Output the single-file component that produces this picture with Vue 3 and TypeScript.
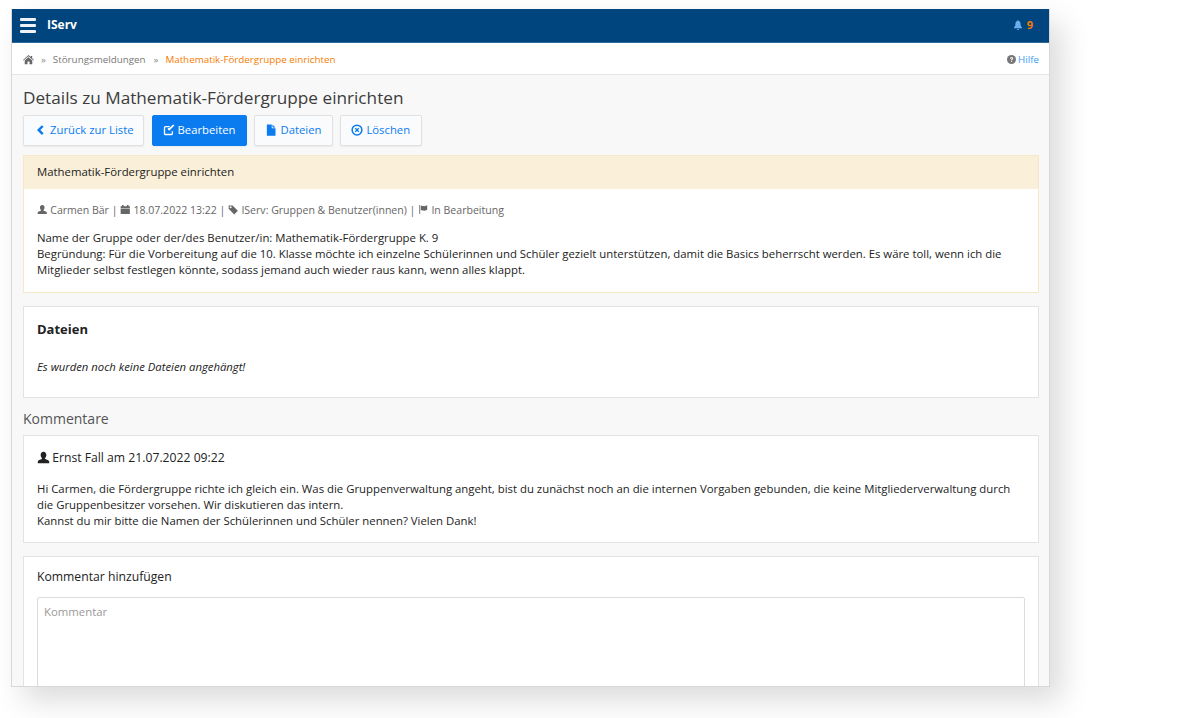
<script setup lang="ts">
const title = 'Mathematik-Fördergruppe einrichten'
</script>

<template>
  <div class="stage">
    <div class="window">
      <header class="topbar">
        <div class="brand">
          <span class="burger"><i></i><i></i><i></i></span>
          <span class="logo">IServ</span>
        </div>
        <div class="notify">
          <svg class="bell" viewBox="0 0 16 16"><path d="M8 0.500c.7 0 1.100.5 1.100 1.100 2 .5 3 2.200 3 4.400 0 3 .7 4.500 2.400 6v1H1.500v-1c1.700-1.500 2.400-3 2.400-6 0-2.200 1-3.900 3-4.400C6.900 1 7.300.5 8 .5zM6.300 14.300h3.400c0 1-.8 1.700-1.700 1.700s-1.700-.7-1.700-1.700z"/></svg>
          <b>9</b>
        </div>
      </header>
      <nav class="crumbs">
        <div class="trail">
          <svg class="home" viewBox="0 0 16 16"><path d="M8 1.500l3.300 3V2.800h2v3.500L16 8.800l-.8.800L8 3.300.8 9.600 0 8.800zM2.500 9.500L8 4.700l5.500 4.800V15H9.500v-4h-3v4h-4z"/></svg>
          <span class="sep">»</span>
          <span>Störungsmeldungen</span>
          <span class="sep second">»</span>
          <span class="current">{{ title }}</span>
        </div>
        <div class="help">
          <svg class="q" viewBox="0 0 16 16"><circle cx="8" cy="8" r="8"/><path d="M5.200 6.200C5.400 4.700 6.500 4 8.100 4c1.700 0 2.800.9 2.800 2.300 0 1.100-.6 1.600-1.300 2.100-.6.400-.7.600-.7 1.100H7.200c-.1-1 .2-1.500 1-2.100.5-.4.800-.6.800-1 0-.5-.4-.8-1-.8s-1 .3-1.100 1zM7.100 10.300H9v1.800H7.100z" fill="#fff"/></svg>
          <a>Hilfe</a>
        </div>
      </nav>
      <main class="content">
        <h1>Details zu {{ title }}</h1>
        <div class="actions">
          <button class="btn back">
            <svg viewBox="0 0 16 16" class="ico"><path d="M10.500 1.500l2.300 2.300L8.500 8l4.300 4.200-2.300 2.300L4 8z"/></svg>Zurück zur Liste
          </button>
          <button class="btn primary">
            <svg viewBox="0 0 16 16" class="ico"><path d="M12.500 9.500v3a1.500 1.500 0 0 1-1.500 1.500H3.500A1.500 1.500 0 0 1 2 12.500V5a1.500 1.500 0 0 1 1.500-1.500H9" fill="none" stroke="currentColor" stroke-width="1.800"/><path d="M6 6.800l2.200 2.200 7-7L13.500.5 8.200 5.800l-.7-.7z"/></svg>Bearbeiten
          </button>
          <button class="btn">
            <svg viewBox="0 0 16 16" class="ico"><path d="M2.500 0.500h6.500v5h5v10H2.500zM10 .5l4 4h-4z"/></svg>Dateien
          </button>
          <button class="btn">
            <svg viewBox="0 0 16 16" class="ico"><circle cx="8" cy="8" r="6.500" fill="none" stroke="currentColor" stroke-width="2"/><path d="M5 6.200L6.200 5 8 6.800 9.800 5 11 6.200 9.200 8 11 9.800 9.800 11 8 9.200 6.200 11 5 9.800 6.800 8z"/></svg>Löschen
          </button>
        </div>

        <section class="panel warm">
          <div class="panel-head">{{ title }}</div>
          <div class="panel-body">
            <p class="meta">
              <svg viewBox="0 0 16 16" class="mi"><path d="M8 1c2.200 0 3.500 1.700 3.500 4 0 1.600-.7 3-1.500 3.700v1.100c2 .6 5 1.500 5 3.200v2H1v-2c0-1.700 3-2.600 5-3.200V8.700C5.200 8 4.500 6.600 4.500 5c0-2.300 1.300-4 3.500-4z"/></svg>
              Carmen Bär |
              <svg viewBox="0 0 16 16" class="mi"><path d="M1 3h2V1h2.500v2h5V1H13v2h2v3H1zM1 7h14v8H1z"/></svg>
              18.07.2022 13:22 |
              <svg viewBox="0 0 16 16" class="mi"><path d="M1 2h6l8 8-5.500 5.500L1 7zM4 6a1.500 1.500 0 1 0 0-3 1.500 1.500 0 0 0 0 3z" fill-rule="evenodd"/></svg>
              IServ: Gruppen &amp; Benutzer(innen) |
              <svg viewBox="0 0 16 16" class="mi"><path d="M2 1h1.300v14H2zM4.300 2.500c2.500-1.200 4 .8 6 .3 1.300-.3 2.700-.8 3.700-1.300v7c-1 .5-2.400 1-3.700 1.300-2 .5-3.500-1.500-6-.3z"/></svg>
              In Bearbeitung
            </p>
            <p class="text">Name der Gruppe oder der/des Benutzer/in: Mathematik-Fördergruppe K. 9<br>Begründung: Für die Vorbereitung auf die 10. Klasse möchte ich einzelne Schülerinnen und Schüler gezielt unterstützen, damit die Basics beherrscht werden. Es wäre toll, wenn ich die Mitglieder selbst festlegen könnte, sodass jemand auch wieder raus kann, wenn alles klappt.</p>
          </div>
        </section>

        <section class="panel files">
          <h2>Dateien</h2>
          <p class="none">Es wurden noch keine Dateien angehängt!</p>
        </section>

        <h3>Kommentare</h3>

        <section class="panel comment">
          <div class="author">
            <svg viewBox="0 0 16 16" class="ai"><path d="M8 1c2.200 0 3.500 1.700 3.500 4 0 1.600-.7 3-1.500 3.700v1.100c2 .6 5 1.500 5 3.200v2H1v-2c0-1.700 3-2.600 5-3.200V8.700C5.200 8 4.500 6.600 4.500 5c0-2.300 1.300-4 3.500-4z"/></svg>
            Ernst Fall am 21.07.2022 09:22
          </div>
          <p class="text">Hi Carmen, die Fördergruppe richte ich gleich ein. Was die Gruppenverwaltung angeht, bist du zunächst noch an die internen Vorgaben gebunden, die keine Mitgliederverwaltung durch die Gruppenbesitzer vorsehen. Wir diskutieren das intern.<br>Kannst du mir bitte die Namen der Schülerinnen und Schüler nennen? Vielen Dank!</p>
        </section>

        <section class="panel add">
          <div class="add-title">Kommentar hinzufügen</div>
          <textarea class="area" placeholder="Kommentar"></textarea>
        </section>
      </main>
    </div>
  </div>
</template>

<style>
html, body { margin: 0; background: #fff; overflow: hidden; }
</style>

<style scoped>
.stage {
  height: 718px;
  overflow: hidden;
  padding: 9px 0 0 11px;
  box-sizing: border-box;
  font-family: "Open Sans", "Noto Sans", sans-serif;
  font-size: 11.370px;
  color: #222;
}
.window {
  width: 1039px;
  height: 678px;
  box-sizing: border-box;
  border: 1px solid #d8d8d8;
  border-top: 0;
  background: #f8f8f8;
  overflow: hidden;
  box-shadow: 12px 14px 28px rgba(0, 0, 0, 0.14);
}
.topbar {
  height: 34px;
  background: #00457e;
  border-bottom: 1px solid #2d6a9c;
  box-sizing: border-box;
  display: flex;
  align-items: center;
  justify-content: space-between;
  padding: 0 16px 2px 8px;
  color: #fff;
}
.brand { display: flex; align-items: center; gap: 11px; }
.burger { display: flex; flex-direction: column; gap: 3px; width: 16px; margin-top: 2px; }
.burger i { display: block; height: 3px; background: #eef2f6; border-radius: 1px; }
.logo { font-weight: 700; font-size: 12px; }
.notify { display: flex; align-items: center; gap: 4px; color: #f57c00; }
.notify b { font-size: 11px; font-weight: 700; }
.bell { width: 10px; height: 10px; fill: #6aaef2; }
.crumbs {
  height: 32px;
  background: #fff;
  border-bottom: 1px solid #e6e6e6;
  box-sizing: border-box;
  display: flex;
  align-items: center;
  justify-content: space-between;
  padding: 1px 10px 0 11px;
  font-size: 9.800px;
  color: #777;
}
.trail { display: flex; align-items: center; gap: 7px; }
.home { width: 11px; height: 11px; fill: #666; }
.sep { color: #888; }
.sep.second { margin-left: 1px; }
.current { color: #f57c00; }
.help { display: flex; align-items: center; gap: 2px; }
.help a { color: #3d9bf5; }
.q { width: 9px; height: 9px; fill: #777; }
.content { padding: 10px 10px 0 11px; }
h1 {
  margin: 0;
  font-size: 17.200px;
  font-weight: 400;
  line-height: 25px;
  color: #3c3c3c;
}
.actions { display: flex; gap: 7px; margin-top: 5px; }
.btn {
  height: 31px;
  padding: 0 11px 2px 10px;
  display: flex;
  align-items: center;
  gap: 3px;
  font: 400 11.300px "Open Sans", sans-serif;
  background: #fafbfc;
  border: 1px solid #e1e1e1;
  border-radius: 2px;
  box-shadow: 0 1px 2px rgba(0, 0, 0, 0.06);
  color: #0a7cf0;
}
.btn.back { padding-right: 9px; gap: 4px; margin-right: 1px; }
.btn.primary { background: #0a7cf0; border-color: #0a7cf0; color: #fff; }
.ico { width: 12px; height: 12px; fill: currentColor; }
.panel {
  background: #fff;
  border: 1px solid #e3e3e3;
  box-sizing: border-box;
}
.warm { margin-top: 9px; height: 138px; border-color: #f5e8c8; }
.panel-head {
  height: 33px;
  background: #faefd8;
  padding: 0 13px 2px;
  box-sizing: border-box;
  display: flex;
  align-items: center;
  color: #222;
}
.panel-body { padding: 13px 13px 0; }
.meta {
  margin: 0;
  line-height: 16px;
  color: #666;
  font-size: 10.550px;
}
.mi { width: 10.500px; height: 11px; fill: #666; vertical-align: -1px; }
.text { margin: 12px 0 0; line-height: 16px; color: #222; }
.files { margin-top: 13px; height: 92px; padding: 13px 13px 0; }
h2 { margin: 0; font-size: 13px; font-weight: 700; line-height: 18px; color: #222; }
.none { margin: 21px 0 0; font-style: italic; font-size: 11.300px; line-height: 16px; }
h3 { margin: 11px 0 6px; font-size: 14px; font-weight: 400; line-height: 20px; color: #555; }
.comment { height: 108px; padding: 13px 13px 0; }
.comment .text { margin-top: 14px; }
.author { font-size: 12.200px; line-height: 18px; color: #222; }
.ai { width: 13px; height: 13px; fill: #222; vertical-align: -1.500px; margin-right: -1px; }
.add { margin-top: 13px; height: 200px; padding: 11px 13px 0; }
.add-title { font-size: 12.200px; line-height: 17px; }
.area {
  display: block;
  width: 100%;
  height: 160px;
  box-sizing: border-box;
  margin-top: 12px;
  border: 1px solid #dcdcdc;
  border-radius: 2px;
  padding: 6px 6px;
  resize: none;
  font: 400 11.370px "Open Sans", sans-serif;
}
.area::placeholder { color: #999; }
</style>
